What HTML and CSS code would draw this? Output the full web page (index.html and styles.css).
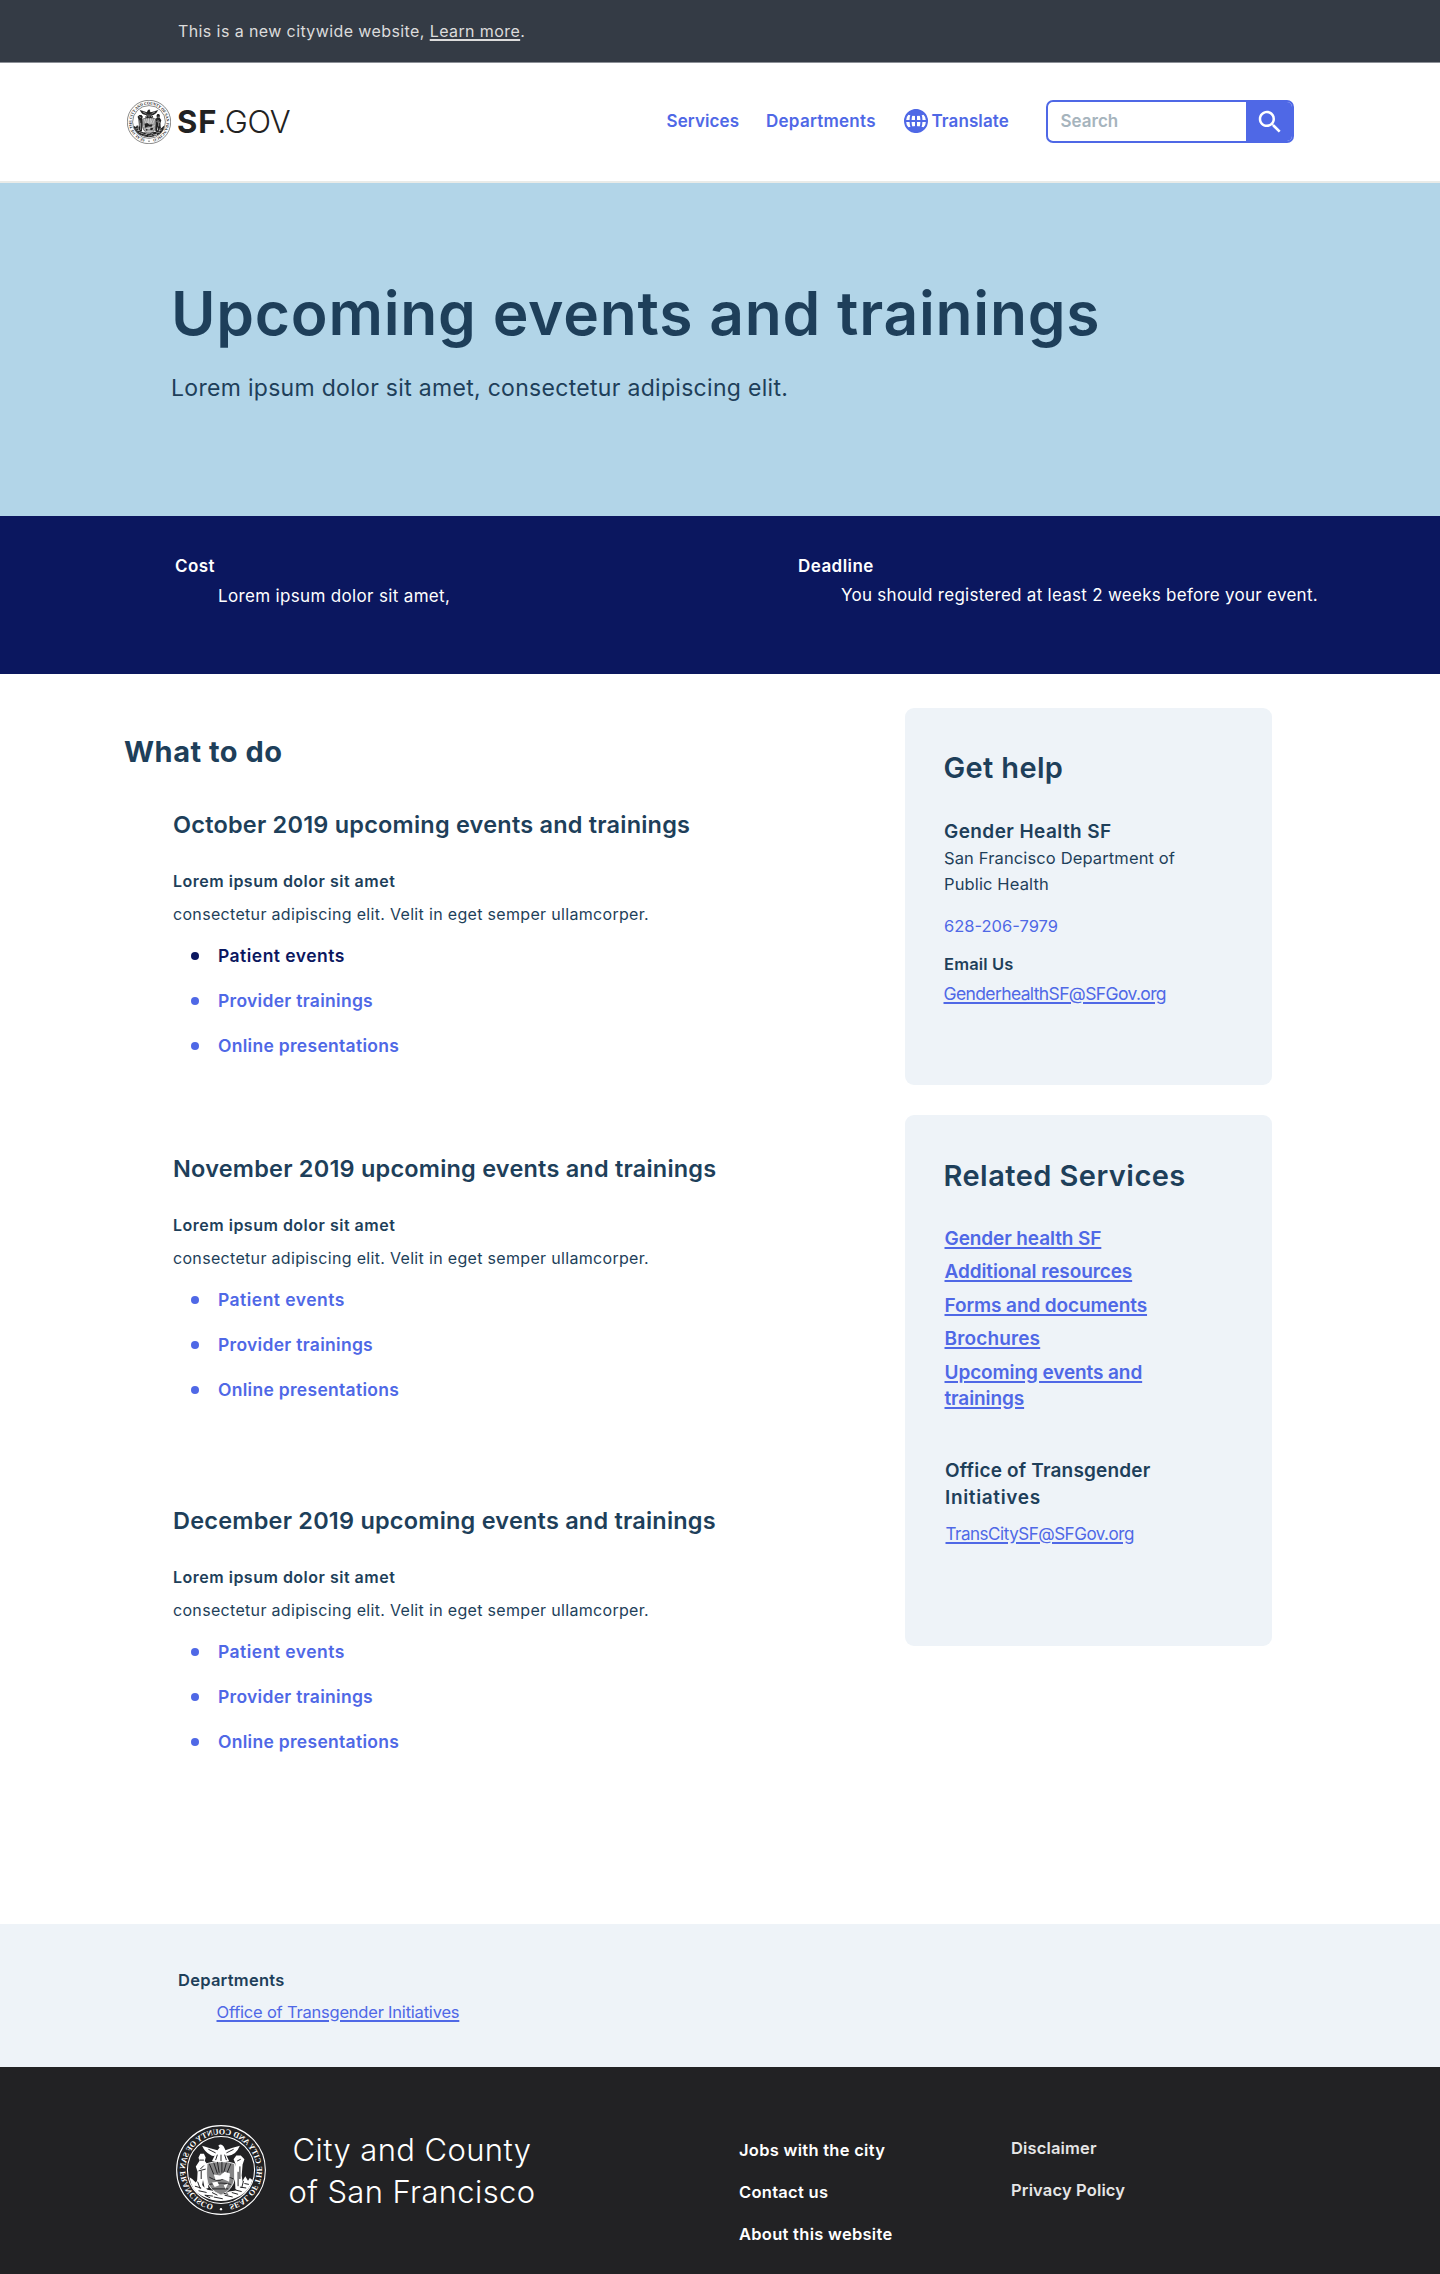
FILE: index.html
```html
<!DOCTYPE html>
<html lang="en">
<head>
<meta charset="utf-8">
<title>Upcoming events and trainings | SF.GOV</title>
<link rel="stylesheet" href="styles.css">
</head>
<body>
<div class="alpha">This is a new citywide website, <a href="#">Learn more</a>.</div>

<header class="header">
  <a class="logo" href="#">
    <svg class="logo-seal" viewBox="0 0 100 100">
      <g id="seal">
        <path id="ring" d="M50 89.6A39.6 39.6 0 0 1 50 10.400A39.6 39.6 0 0 1 50 89.6" fill="none"/>
        <circle cx="50" cy="50" r="49.300" class="seal-line"/>
        <circle cx="50" cy="50" r="37.300" class="seal-line"/>
        <circle cx="50" cy="93.500" r="1.300" class="seal-ink"/>
        <text class="seal-text"><textPath href="#ring" startOffset="9" textLength="231">SEAL OF THE CITY AND COUNTY OF SAN FRANCISCO</textPath></text>
        <!-- eagle -->
        <path class="seal-ink" d="M29 23Q37 25 45 28L47 24Q50 20 53 23L51.500 25L54 28Q62 26 71 23Q68 30 62 33Q59 35 57 34L60 40Q50 43 41 40L44 34Q34 35 29 23Z"/>
        <path class="seal-cut" d="M46 33l-2 6M50 33v7M54 33l2 6M36 27l8 4M64 27l-8 4"/>
        <!-- shield -->
        <path class="seal-soft" d="M35 43Q50 38 66 43V60Q64 72 50 78Q37 72 35 60Z"/>
        <path class="seal-cut" d="M39 43l5 12M44 42l3 11M49 41v12M54 41l-2 12M58 42l-4 12M63 43l-5 12M36 60q7-4 12 0t15-2M39 66q10-3 24 0M42 71h18"/>
        <path class="seal-ink" d="M40 54l6-2 5 4 7-1-2 6-8-1-7 3zM54 63l6 1-3 5-5-2zM42 65l5 2-2 4z"/>
        <!-- supporters -->
        <path class="seal-ink" d="M24 38l4-4 5 0 3 4-2 5 1 8-1 20-4 2-5-2 2-15-1-12z"/>
        <path class="seal-ink" d="M67 36l2-4 4 0 2 4-1 4 4 6-2 6 1 19-5 2-2-12-2 10-4-1 2-17-1-9 3-4z"/>
        <path class="seal-cut" d="M28 38l4 2M29 46v14M31 52v16M69 39h5M69 45l4 4M72 51v9M67 49l8 2"/>
        <!-- ground -->
        <path class="seal-ink" d="M15 61l3-2 2 3 3-5 3 5 2 6 7 5 6 1 9 4 9-5 6-1 5-4 3-5 3-2 2 3 4-4 3-2Q83 73 71 79Q50 90 29 79Q18 72 15 61Z"/>
        <path class="seal-cut" d="M19 66l5-1M22 70l7-1M27 74l8-2M31 77l7-2M37 80l9-2M48 82l10-2M59 79l9-1M66 75l9-2M72 70l7-2M42 77l5-1M54 78l6-3M25 62l2 8M76 63l-3 8M62 81l6-3"/>
      </g>
    </svg>
    <span class="logo-text"><b>SF</b><span>.GOV</span></span>
  </a>
  <nav class="nav">
    <a href="#">Services</a>
    <a class="nav-departments" href="#">Departments</a>
    <svg class="globe" viewBox="0 0 24 24">
      <circle cx="12" cy="12" r="11"/>
      <ellipse cx="12" cy="12" rx="5.500" ry="11"/>
      <path d="M12 1v22M1 12h22"/>
      <path class="cap" d="M3.500 5.500Q12 8.500 20.500 5.500L17 2.500L12 1L7 2.500ZM3.500 18.500Q12 15.500 20.500 18.500L17 21.500L12 23L7 21.500Z"/>
    </svg>
    <a href="#">Translate</a>
  </nav>
  <form class="search">
    <span class="search-field">Search</span>
    <span class="search-button">
      <svg viewBox="0 0 24 24"><path d="M15.500 14h-.79l-.28-.27C15.410 12.590 16 11.110 16 9.500 16 5.910 13.090 3 9.500 3S3 5.910 3 9.500 5.910 16 9.500 16c1.610 0 3.090-.59 4.230-1.570l.27.28v.79l5 4.990L20.490 19l-4.990-5zm-6 0C7.010 14 5 11.990 5 9.500S7.010 5 9.500 5 14 7.010 14 9.500 11.990 14 9.500 14z"/></svg>
    </span>
  </form>
</header>

<section class="hero">
  <h1>Upcoming events and trainings</h1>
  <p>Lorem ipsum dolor sit amet, consectetur adipiscing elit.</p>
</section>

<section class="facts">
  <div class="fact">
    <h4>Cost</h4>
    <p>Lorem ipsum dolor sit amet,</p>
  </div>
  <div class="fact fact-deadline">
    <h4>Deadline</h4>
    <p>You should registered at least 2 weeks before your event.</p>
  </div>
</section>

<main class="main">
  <div class="content">
    <h2>What to do</h2>
    <section class="month">
      <h3>October 2019 upcoming events and trainings</h3>
      <h4>Lorem ipsum dolor sit amet</h4>
      <p>consectetur adipiscing elit. Velit in eget semper ullamcorper.</p>
      <ul>
        <li class="current wide"><a href="#">Patient events</a></li>
        <li><a href="#">Provider trainings</a></li>
        <li><a href="#">Online presentations</a></li>
      </ul>
    </section>
    <section class="month november">
      <h3>November 2019 upcoming events and trainings</h3>
      <h4>Lorem ipsum dolor sit amet</h4>
      <p>consectetur adipiscing elit. Velit in eget semper ullamcorper.</p>
      <ul>
        <li class="wide"><a href="#">Patient events</a></li>
        <li><a href="#">Provider trainings</a></li>
        <li><a href="#">Online presentations</a></li>
      </ul>
    </section>
    <section class="month december">
      <h3>December 2019 upcoming events and trainings</h3>
      <h4>Lorem ipsum dolor sit amet</h4>
      <p>consectetur adipiscing elit. Velit in eget semper ullamcorper.</p>
      <ul>
        <li class="wide"><a href="#">Patient events</a></li>
        <li><a href="#">Provider trainings</a></li>
        <li><a href="#">Online presentations</a></li>
      </ul>
    </section>
  </div>

  <aside class="sidebar">
    <section class="card help">
      <h2>Get help</h2>
      <h3>Gender Health SF</h3>
      <p class="address">San Francisco Department of<br>Public Health</p>
      <a class="phone" href="#">628-206-7979</a>
      <h4>Email Us</h4>
      <a class="email" href="#">GenderhealthSF@SFGov.org</a>
    </section>
    <section class="card related">
      <h2>Related Services</h2>
      <ul>
        <li><a href="#">Gender health SF</a></li>
        <li><a href="#">Additional resources</a></li>
        <li><a href="#">Forms and documents</a></li>
        <li class="wide"><a href="#">Brochures</a></li>
        <li><a href="#">Upcoming events and<br>trainings</a></li>
      </ul>
      <h3>Office of Transgender<br><span class="wide">Initiatives</span></h3>
      <a class="email" href="#">TransCitySF@SFGov.org</a>
    </section>
  </aside>
</main>

<section class="departments">
  <h4>Departments</h4>
  <a href="#">Office of Transgender Initiatives</a>
</section>

<footer class="footer">
  <svg class="footer-seal" viewBox="0 0 100 100"><use href="#seal"/></svg>
  <div class="footer-name"><span>City and County</span><span class="second">of San Francisco</span></div>
  <div class="footer-links">
    <a href="#">Jobs with the city</a>
    <a href="#">Contact us</a>
    <a href="#">About this website</a>
  </div>
  <div class="footer-links legal">
    <a href="#">Disclaimer</a>
    <a href="#">Privacy Policy</a>
  </div>
</footer>
</body>
</html>
```
FILE: styles.css
```css
:root {
  --blue: #4f68e6;
  --slate: #1e3f5a;
  --navy: #0b175f;
  --mist: #eef3f8;
}

* { box-sizing: border-box; }

body {
  margin: 0;
  background: #fff;
  color: var(--slate);
  font-family: Inter, "Liberation Sans", sans-serif;
  font-size: 16px;
  line-height: 24px;
}

h1, h2, h3, h4, p, ul { margin: 0; padding: 0; font-weight: 600; }
p { font-weight: 400; }
ul { list-style: none; }
a { color: inherit; text-decoration: none; }

/* City seal artwork */
.seal-line { fill: none; stroke: currentColor; stroke-width: 1.2; }
.seal-ink { fill: currentColor; }
.seal-soft { fill: currentColor; fill-opacity: 0.45; stroke: currentColor; }
.seal-cut { fill: none; stroke: var(--seal-ground); stroke-width: 1.1; }
.seal-text {
  fill: currentColor;
  font: 700 9px "Liberation Serif", serif;
  letter-spacing: 0;
}

/* Notice bar */
.alpha {
  height: 63px;
  padding: 19px 0 0 178px;
  border-bottom: 1px solid #8c9097;
  background: #343b45;
  color: #dcdcdc;
  letter-spacing: 0.4px;
}
.alpha a {
  text-decoration: underline;
  text-decoration-thickness: 2px;
  text-underline-offset: 2px;
}

/* Header */
.header {
  display: flex;
  align-items: center;
  height: 120px;
  padding-left: 127px;
  border-bottom: 2px solid #e9ebe8;
}
.logo { display: flex; align-items: center; gap: 5px; width: 539.500px; color: #222; }
.logo-seal { width: 44px; height: 44px; --seal-ground: #fff; }
.logo-text { display: flex; font-size: 31px; line-height: 40px; font-weight: 300; letter-spacing: -0.2px; }
.logo-text b { margin-left: 1px; font-weight: 700; letter-spacing: 1px; }
.nav {
  display: grid;
  grid-template-columns: 99.500px 137.500px 28px 114px;
  align-items: center;
  color: var(--blue);
  font-size: 17px;
  font-weight: 600;
  letter-spacing: 0.1px;
}
.nav a { padding-bottom: 2px; }
.nav-departments { letter-spacing: 0.26px; }
.globe { width: 24px; height: 24px; margin-bottom: 2px; fill: none; stroke: var(--blue); stroke-width: 2; }
.globe .cap { fill: var(--blue); stroke: none; }
.search {
  display: flex;
  width: 248px;
  height: 43px;
  margin-bottom: 2px;
  border: 2px solid var(--blue);
  border-radius: 7px;
  overflow: hidden;
}
.search-field {
  flex: 1;
  padding: 7.500px 0 0 13px;
  color: #a6b4bd;
  font-size: 17px;
  font-weight: 600;
}
.search-button {
  display: flex;
  align-items: center;
  justify-content: center;
  width: 46px;
  padding: 1px 0 0 3px;
  background: var(--blue);
}
.search-button svg { width: 30px; height: 30px; fill: #fff; }

/* Hero */
.hero { height: 333px; padding: 94px 0 0 171px; background: #b2d5e8; }
.hero h1 { font-size: 60.500px; line-height: 72px; letter-spacing: 0.77px; }
.hero p { margin-top: 23px; font-size: 23px; line-height: 32px; letter-spacing: 0.3px; }

/* Key facts */
.facts {
  display: grid;
  grid-template-columns: 623px 1fr;
  height: 158px;
  padding: 38px 0 0 175px;
  background: var(--navy);
  color: #fff;
  font-size: 17px;
}
.fact h4 { font-size: 17px; letter-spacing: 0.45px; }
.fact p { margin: 6px 0 0 43px; letter-spacing: 0.34px; }
.fact-deadline p { margin-top: 5px; letter-spacing: 0.27px; }

/* Main */
.main {
  display: grid;
  grid-template-columns: 781px 367px;
  height: 1250px;
  padding-left: 124px;
}
.content { padding-top: 60px; }
.content h2 { font-size: 29px; line-height: 36px; font-weight: 700; letter-spacing: 0.5px; }
.month { margin-top: 38.500px; padding-left: 49px; }
.month.november { margin-top: 95px; }
.month.december { margin-top: 103px; }
.month h3 { font-size: 23.500px; line-height: 32px; letter-spacing: 0.21px; }
.month h4 { margin-top: 28.500px; letter-spacing: 0.5px; }
.month p { margin-top: 9px; letter-spacing: 0.32px; }
.month ul { display: grid; gap: 21px; margin-top: 17.500px; color: var(--blue); }
.month li {
  display: flex;
  align-items: center;
  gap: 19px;
  padding-left: 18px;
  font-size: 17.500px;
  font-weight: 600;
  letter-spacing: 0.29px;
}
.month li::before { content: ""; width: 8px; height: 8px; border-radius: 50%; background: currentColor; }
.month li.wide { letter-spacing: 0.47px; }
.month li.current { color: var(--navy); }

/* Sidebar */
.sidebar { display: flex; flex-direction: column; gap: 30px; padding-top: 34px; }
.card { padding-left: 38.500px; border-radius: 9px; background: var(--mist); }
.card h2 { font-size: 29px; line-height: 36px; letter-spacing: 0.35px; }
.card h3 { font-size: 19px; line-height: 24px; letter-spacing: 0.42px; }
.card a { color: var(--blue); }
.help { height: 377px; padding-top: 41.500px; }
.help h3 { margin-top: 34.500px; padding-left: 0.5px; }
.help .address { margin-top: 1px; padding-left: 0.5px; font-size: 16.500px; line-height: 26px; letter-spacing: 0.13px; }
.help .phone { display: block; margin-top: 17px; padding-left: 0.5px; font-size: 16.500px; }
.help h4 { margin-top: 14px; padding-left: 0.5px; font-size: 16.500px; letter-spacing: 0.15px; }
.card .email {
  display: block;
  margin-top: 5.500px;
  font-size: 17.500px;
  letter-spacing: -0.62px;
  text-decoration: underline;
  text-decoration-thickness: 1.500px;
  text-underline-offset: 2px;
}
.related { height: 531px; padding-top: 42.500px; }
.related h2 { letter-spacing: 0.45px; }
.related ul { display: grid; gap: 7.500px; margin-top: 32px; font-size: 19px; line-height: 26px; letter-spacing: -0.1px; }
.related li { padding-left: 1px; font-weight: 600; }
.related li.wide { letter-spacing: 0.15px; }
.related li a {
  text-decoration: underline;
  text-decoration-thickness: 1.500px;
  text-underline-offset: 2px;
}
.related h3 { margin-top: 46.500px; padding-left: 1.5px; line-height: 26.500px; letter-spacing: 0.18px; }
.related h3 .wide { letter-spacing: 0.65px; }
.related .email { margin: 10.500px 0 0 2px; font-size: 17px; letter-spacing: -0.47px; }

/* Departments */
.departments { height: 143px; padding: 44px 0 0 178px; background: var(--mist); font-size: 16.500px; }
.departments h4 { letter-spacing: 0.25px; }
.departments a {
  display: block;
  margin: 8px 0 0 38.500px;
  color: var(--blue);
  letter-spacing: -0.21px;
  text-decoration: underline;
  text-decoration-thickness: 1.500px;
  text-underline-offset: 2px;
}

/* Footer */
.footer {
  display: flex;
  align-items: flex-start;
  height: 207px;
  padding-left: 176px;
  background: #222224;
  color: #fff;
}
.footer-seal { width: 90px; height: 90px; margin-top: 58px; transform: scaleX(-1); --seal-ground: #222224; }
.footer-name {
  display: flex;
  flex-direction: column;
  align-items: center;
  width: 250px;
  margin: 62px 202px 0 21px;
  font-size: 31px;
  line-height: 42px;
  font-weight: 300;
  letter-spacing: 0.4px;
}
.footer-name .second { letter-spacing: 0.35px; }
.footer-links {
  display: grid;
  gap: 18px;
  width: 272px;
  margin-top: 71px;
  font-size: 16.500px;
  font-weight: 600;
  letter-spacing: 0.28px;
}
.footer-links.legal { margin-top: 69px; color: #e6e6e6; letter-spacing: 0.15px; }
```
